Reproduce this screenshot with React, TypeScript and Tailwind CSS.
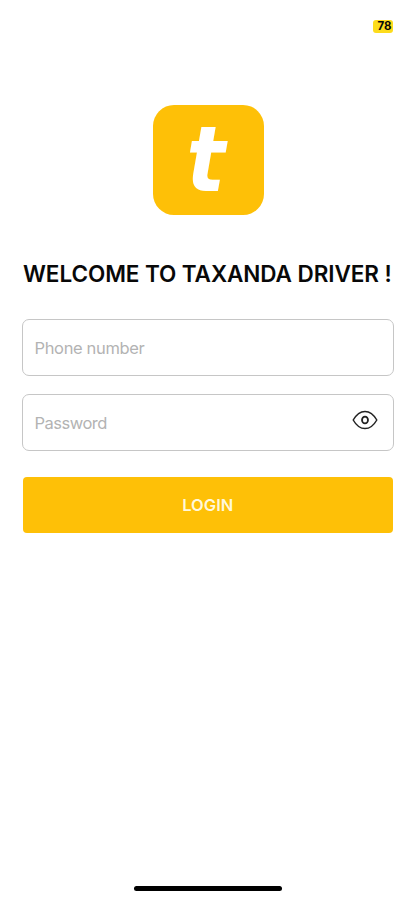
import React from "react";

function EyeIcon() {
  return (
    <svg width="26" height="20" viewBox="0 0 26 20" fill="none" stroke="#222" strokeWidth="1.5">
      <path d="M1.2 10C4.3 4.5 8.3 1.4 13 1.4S21.7 4.5 24.8 10C21.7 15.5 17.7 18.6 13 18.6S4.3 15.5 1.2 10Z" strokeLinejoin="round" />
      <ellipse cx="13" cy="10" rx="3" ry="3.4" strokeWidth="1.8" />
    </svg>
  );
}

export default function App() {
  return (
    <main className="flex h-[900px] w-full flex-col bg-white font-['Inter',sans-serif] text-[#080808]">
      <header className="flex h-[104px] shrink-0 justify-end pr-[22px] pt-5">
        <div className="flex h-[13px] w-5 items-center justify-center rounded-[3px] bg-[#fddc1c] pl-[3px] text-[11.5px] font-bold leading-none">
          78
        </div>
      </header>
      <div className="ml-[153px] mt-[0.5px] flex h-[110.5px] w-[110.5px] shrink-0 items-center justify-center rounded-[21px] bg-[#fec007] pb-px pr-[5px]">
        <span className="scale-x-[0.89] font-['DejaVu_Sans',sans-serif] text-[91px] font-bold italic leading-none text-white">t</span>
      </div>
      <h1 className="ml-[23px] mt-[43px] h-8 shrink-0 whitespace-nowrap text-[22.5px] font-semibold leading-8 tracking-[-0.08px]">
        WELCOME TO TAXANDA DRIVER !
      </h1>
      <form className="ml-[22px] mt-[29px] flex w-[372px] flex-col">
        <div className="flex h-[57px] items-center rounded-[7px] border-[1.5px] border-[#c6c6c6] pl-[11.5px] pt-0.5">
          <input placeholder="Phone number" className="w-full bg-transparent text-[16.5px] tracking-[-0.35px] outline-none placeholder:text-[#b3b3b3]" />
        </div>
        <div className="mt-[18px] flex h-[57px] items-center rounded-[7px] border-[1.5px] border-[#c6c6c6] pl-[11.5px] pr-[15px] pt-0.5">
          <input type="password" placeholder="Password" className="min-w-0 flex-1 bg-transparent text-[16.5px] tracking-[-0.5px] outline-none placeholder:text-[#b3b3b3]" />
          <button type="button" aria-label="Show password" className="mb-[7px]">
            <EyeIcon />
          </button>
        </div>
        <button type="button" className="ml-[0.5px] mt-[26px] h-[56px] w-[370.5px] rounded-[4px] bg-[#fec007] pt-px text-[16.5px] font-semibold text-[#fff8dc]">
          LOGIN
        </button>
      </form>
      <div className="mb-[9px] ml-[134px] mt-auto h-[5px] w-[148px] rounded-full bg-black" />
    </main>
  );
}
